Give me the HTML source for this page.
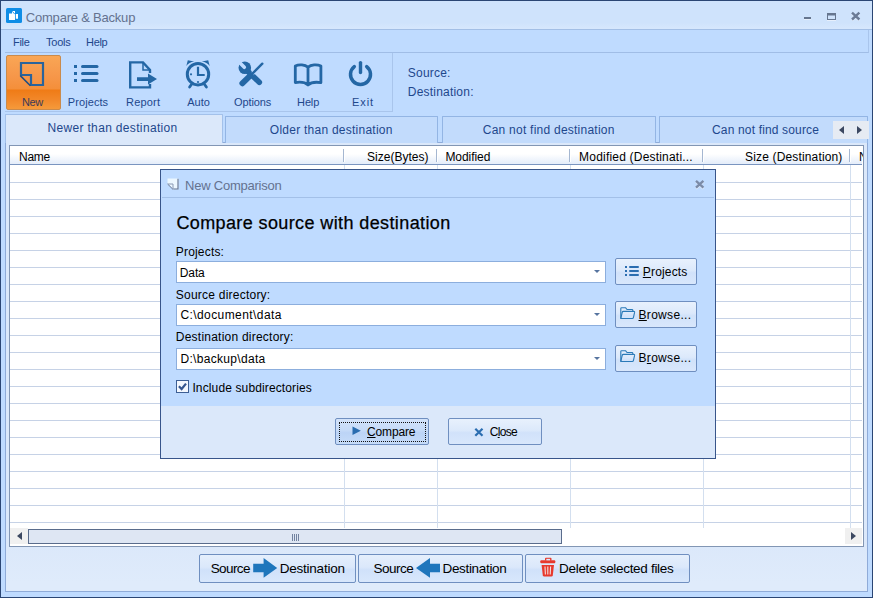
<!DOCTYPE html>
<html>
<head>
<meta charset="utf-8">
<style>
*{box-sizing:border-box;margin:0;padding:0}
html,body{width:873px;height:598px;overflow:hidden;background:#bfdbff}
body{font-family:"Liberation Sans",sans-serif;font-size:12px;position:relative}
div,i,svg{position:absolute}
.tx{position:absolute;white-space:nowrap;line-height:1}
.tx u{text-decoration:underline;text-underline-offset:1px}
#win{left:0;top:0;width:873px;height:598px;border:1px solid #2b4674;background:#bfdbff}
#title{left:1px;top:1px;width:871px;height:28px;background:linear-gradient(#cfe3fc 0,#cfe3fc 22px,#d6e7fd 27px)}
#tline{left:1px;top:29px;width:871px;height:1px;background:#a3bfe6}
#menu{left:5px;top:30px;width:864px;height:23px;border-right:1px solid #a9c5ec;border-bottom:1px solid #a0bde6}
#tb{left:5px;top:53px;width:388px;height:59px;border-right:1px solid #a9c5ec;border-bottom:1px solid #a9c5ec}
#new{left:6px;top:55px;width:55px;height:55px;border:1px solid #c98a4c;border-radius:2px;background:linear-gradient(#f9a655 0px,#f6974a 20px,#f48f3a 33px,#ef7b16 34px,#f2882a 44px,#f69c3c 54px)}
#panel{left:5px;top:142px;width:863px;height:450px;background:linear-gradient(#dbe8fa 0,#dbe8fa 400px,#dfebfb 440px);border:1px solid #8fabd8}
.tab{top:116px;height:27px;border:1px solid #93b5e4;border-bottom:none;background:#c2dbfc;border-radius:1px 1px 0 0}
#tab1{left:5px;top:114px;width:218px;height:29px;background:#dbe8fa;border-color:#a3c1ea}
#tabsc{left:833px;top:121px;width:36px;height:18px;background:#e6ebf3}
.tl{width:0;height:0;border-top:4.5px solid transparent;border-bottom:4.5px solid transparent;border-right:5px solid #3c4861}
.tr{width:0;height:0;border-top:4.5px solid transparent;border-bottom:4.5px solid transparent;border-left:5px solid #3c4861}
#grid{left:9px;top:145px;width:855px;height:402px;border:1px solid #8296b4;background:#fff;overflow:hidden}
#ghead{left:0;top:0;width:852px;height:19px;background:linear-gradient(#fff 0,#fff 8px,#e6eefa 17px);border-bottom:1px solid #7a95c0}
.vsep{top:3px;width:2px;height:13px;border-left:1px solid #a5b7d1;background:#fff}
.hl{left:0;width:852px;height:1px;background:#c6d2e6}
.vline{top:19px;width:1px;height:363px;background:#d3dfef}
#sb{left:0;top:382px;width:853px;height:18px;background:#fff}
#sbl{left:0;top:0;width:18px;height:16px;background:#f0f0f0}
#thumb{left:18px;top:1px;width:534px;height:15px;border:1px solid #5a6c8c;background:#dee6f3}
#grip{left:263px;top:4px;width:7px;height:7px;background:repeating-linear-gradient(90deg,#7283a0 0,#7283a0 1px,transparent 1px,transparent 2px)}
.bbtn{top:554px;height:29px;border:1px solid #6f8fc0;border-radius:2px;background:linear-gradient(#e5effc 0%,#dbe8fb 45%,#d0e1fa 55%,#d8e7fc 100%)}
#dlg{left:160px;top:169px;width:556px;height:290px;border:1px solid #38558a;background:#bfdbff}
#dline{left:1px;top:27px;width:552px;height:1px;background:#a3c0e8}
#dfoot{left:0;top:236px;width:554px;height:52px;background:#dbe8fa}
.combo{left:15px;width:430px;height:22px;border:1px solid #8caedd;background:#fff}
.combo i{right:5px;top:8px;width:0;height:0;border-left:3px solid transparent;border-right:3px solid transparent;border-top:3px solid #56749f}
.dbtn{height:27px;border:1px solid #6f8fc0;border-radius:2px;background:linear-gradient(#e8f1fd 0%,#dce9fb 45%,#d1e2fa 55%,#d8e7fc 100%)}
#chk{left:15px;top:210px;width:13px;height:13px;border:1px solid #3d5f94;background:#f4f8fe}
</style>
</head>
<body>
<div id="win"></div>
<div id="title"></div><div id="tline"></div>
<div id="menu"></div>
<div id="tb"></div>
<div id="new"></div>
<div id="panel"></div>
<div class="tab" style="left:225px;width:213px"></div>
<div class="tab" style="left:442px;width:214px"></div>
<div class="tab" style="left:659px;width:209px"></div>
<div class="tab" id="tab1"></div>
<div id="tabsc"><i class="tl" style="left:6px;top:4.5px"></i><i class="tr" style="left:24px;top:4.5px"></i></div>
<div id="grid">
 <div id="ghead">
  <i class="vsep" style="left:333px"></i><i class="vsep" style="left:426px"></i><i class="vsep" style="left:559px"></i><i class="vsep" style="left:692px"></i><i class="vsep" style="left:839px"></i>
 </div>
 <i class="hl" style="top:36px"></i><i class="hl" style="top:53px"></i><i class="hl" style="top:70px"></i><i class="hl" style="top:87px"></i><i class="hl" style="top:104px"></i><i class="hl" style="top:121px"></i><i class="hl" style="top:138px"></i><i class="hl" style="top:155px"></i><i class="hl" style="top:172px"></i><i class="hl" style="top:189px"></i><i class="hl" style="top:206px"></i><i class="hl" style="top:223px"></i><i class="hl" style="top:240px"></i><i class="hl" style="top:257px"></i><i class="hl" style="top:274px"></i><i class="hl" style="top:291px"></i><i class="hl" style="top:308px"></i><i class="hl" style="top:325px"></i><i class="hl" style="top:342px"></i><i class="hl" style="top:359px"></i><i class="hl" style="top:376px"></i>
 <i class="vline" style="left:334px"></i><i class="vline" style="left:427px"></i><i class="vline" style="left:560px"></i><i class="vline" style="left:693px"></i><i class="vline" style="left:840px"></i>
 <div id="sb"><div id="sbl"><i class="tl" style="left:7px;top:4px"></i></div><div id="thumb"><i id="grip"></i></div><div style="left:835px;top:0;width:17px;height:16px;background:#f0f0f0"><i class="tr" style="left:6px;top:4px"></i></div></div>
 <span class="tx" style="left:849px;top:5px;font-size:12px;color:#000">N</span>
</div>
<div class="bbtn" style="left:199px;width:157px"></div>
<div class="bbtn" style="left:358px;width:165px"></div>
<div class="bbtn" style="left:525px;width:165px"></div>
<div id="dlg">
 <div id="dfoot"></div>
 <div id="dline"></div>
 <div class="combo" style="top:91px"><i></i></div>
 <div class="combo" style="top:134px"><i></i></div>
 <div class="combo" style="top:178px"><i></i></div>
 <div class="dbtn" style="left:454px;top:88px;width:82px"></div>
 <div class="dbtn" style="left:454px;top:131px;width:82px"></div>
 <div class="dbtn" style="left:454px;top:175px;width:82px"></div>
 <div id="chk"></div>
 <div class="dbtn" style="left:174px;top:248px;width:94px;background:linear-gradient(#d3e3fa 0%,#c6dbf8 45%,#bcd4f6 55%,#c6dcf9 100%)"><i style="left:3px;top:3px;width:87px;height:20px;border:1px dotted #111"></i></div>
 <div class="dbtn" style="left:287px;top:248px;width:94px"></div>
</div>
<svg style="left:0;top:0" width="873" height="598" viewBox="0 0 873 598">
<!-- app icon -->
<rect x="6" y="8" width="16" height="15" rx="1.5" fill="#0f8de6"/>
<path d="M9,13.5 H12 V11 H15 V20 H9 Z M15.8,14 H18 V18.8 H15.8 Z" fill="#fff"/>
<path d="M12.3,11.3 L14.8,14.2" stroke="#0f8de6" stroke-width="0.9" fill="none"/>
<!-- window controls -->
<rect x="804" y="17" width="7" height="2" fill="#66768f"/><rect x="804" y="19" width="7" height="1" fill="#e6effc"/>
<rect x="827.5" y="13.5" width="8" height="6" fill="none" stroke="#66768f" stroke-width="1"/><rect x="827" y="13" width="9" height="2.5" fill="#66768f"/><rect x="827" y="20" width="9" height="1" fill="#e6effc"/>
<path d="M852,13.7 L859.4,20.5 M859.4,13.7 L852,20.5" stroke="#e3edfb" stroke-width="2.2" fill="none"/><path d="M852,12.7 L859.4,19.5 M859.4,12.7 L852,19.5" stroke="#6b7b96" stroke-width="2.4" fill="none"/>
<!-- New -->
<path d="M21,63 H43 V85 H31 V75 H21 Z" fill="none" stroke="#2a649c" stroke-width="2.2" stroke-linejoin="miter"/>
<path d="M20.3,75.6 L30.4,85.7" fill="none" stroke="#1d4d84" stroke-width="1.5"/>
<!-- Projects -->
<g fill="#2467a5">
<rect x="74" y="65" width="3" height="3"/><rect x="74" y="72" width="3" height="3"/><rect x="74" y="79" width="3" height="3"/>
<rect x="81" y="65" width="17.5" height="3" rx="1.5"/><rect x="81" y="72" width="17.5" height="3" rx="1.5"/><rect x="81" y="79" width="17.5" height="3" rx="1.5"/>
</g>
<!-- Report -->
<path d="M150,73 V70 L143,62.4 H130.2 V87.4 H150 V84" fill="none" stroke="#2467a5" stroke-width="2.4"/>
<path d="M143,62.5 V70 H150" fill="none" stroke="#2467a5" stroke-width="1.5"/>
<path d="M137,77.2 H148 V73.6 L157,79.1 L148,84.6 V81 H137 Z" fill="#2467a5"/>
<!-- Auto -->
<g stroke="#2467a5" fill="none">
<circle cx="198" cy="74.2" r="10.7" stroke-width="3"/>
<path d="M198,66.8 V75 H204.7" stroke-width="2.2"/>
<path d="M191.6,84.2 L189.6,87 M204.4,84.2 L206.4,87" stroke-width="2.8" stroke-linecap="round"/>
</g>
<g fill="#2467a5">
<path d="M186.3,66 L187.8,60.2 L194.2,61.6 Q189,62.5 186.3,66 Z"/><path d="M209.7,66 L208.2,60.2 L201.8,61.6 Q207,62.5 209.7,66 Z"/>
<circle cx="191" cy="74.3" r="1.1"/><circle cx="198" cy="82" r="1.1"/>
</g>
<!-- Options -->
<g stroke="#2467a5" fill="none" stroke-linecap="round">
<path d="M247,70.5 L259.3,82.3" stroke-width="5.6"/>
</g>
<circle cx="244.8" cy="67.8" r="6.3" fill="#2467a5"/>
<path d="M244.3,67.3 L238.8,61.8" stroke="#bfdbff" stroke-width="3.6" stroke-linecap="round" fill="none"/>
<path d="M262.9,63 L249.5,76.5" stroke="#bfdbff" stroke-width="3.8" fill="none"/>
<g stroke="#2467a5" fill="none" stroke-linecap="round">
<path d="M262.3,63.7 L252,74" stroke-width="2.4"/>
<path d="M250.8,75.2 L242.3,83.3" stroke-width="5.8"/>
</g>
<!-- Help -->
<path d="M308,67.3 C305,64.6 299,64.2 295.3,66 V82.6 C299,82 305,82.2 308,85 C311,82.2 317,82 320.9,82.6 V66 C317,64.2 311,64.6 308,67.3 Z M308,67.3 V84" fill="none" stroke="#2467a5" stroke-width="2.8" stroke-linejoin="round"/>
<!-- Exit -->
<path d="M354.3,66.6 A10,10 0 1 0 366.7,66.6" fill="none" stroke="#2467a5" stroke-width="3.5" stroke-linecap="round"/>
<path d="M360.5,62.6 V72.5" stroke="#2467a5" stroke-width="3.4" stroke-linecap="round" fill="none"/>
<!-- dialog title icon + close -->
<path d="M167.5,178.5 H178.5 V189.5 H173 L167.5,184 Z" fill="#ecf7ff"/>
<path d="M178,178.8 V189 H173.2" fill="none" stroke="#5f7090" stroke-width="1.1"/>
<path d="M167.6,184 L173,189.4" fill="none" stroke="#5f7090" stroke-width="1"/>
<path d="M167.8,184 H173 V189" fill="none" stroke="#8a99b4" stroke-width="1"/>
<path d="M696,181.8 L703.4,188.6 M703.4,181.8 L696,188.6" stroke="#dfeafa" stroke-width="2.2" fill="none"/><path d="M696,180.8 L703.4,187.6 M703.4,180.8 L696,187.6" stroke="#7b8ba8" stroke-width="2.4" fill="none"/>
<!-- projects btn icon -->
<g fill="#2a6db0">
<rect x="625" y="266" width="2" height="2"/><rect x="625" y="270" width="2" height="2"/><rect x="625" y="274" width="2" height="2"/>
<rect x="629" y="266" width="10" height="2" rx="1"/><rect x="629" y="270" width="10" height="2" rx="1"/><rect x="629" y="274" width="10" height="2" rx="1"/>
</g>
<!-- folders -->
<g fill="none" stroke="#2b7ab8" stroke-width="1.1" stroke-linejoin="round">
<path d="M620.8,318.5 V308.5 Q620.8,307.7 621.6,307.7 H625.5 L627,309.5 H632 Q632.8,309.5 632.8,310.3 V311.5"/>
<path d="M620.8,318.5 L622.2,312.3 Q622.4,311.4 623.3,311.4 H633.8 Q634.8,311.4 634.6,312.4 L633.4,317.7 Q633.2,318.5 632.3,318.5 Z"/>
</g>
<g transform="translate(0,43)" fill="none" stroke="#2b7ab8" stroke-width="1.1" stroke-linejoin="round">
<path d="M620.8,318.5 V308.5 Q620.8,307.7 621.6,307.7 H625.5 L627,309.5 H632 Q632.8,309.5 632.8,310.3 V311.5"/>
<path d="M620.8,318.5 L622.2,312.3 Q622.4,311.4 623.3,311.4 H633.8 Q634.8,311.4 634.6,312.4 L633.4,317.7 Q633.2,318.5 632.3,318.5 Z"/>
</g>

<!-- check -->
<path d="M178.9,386.3 L181.6,389 L186,383.6" fill="none" stroke="#35568f" stroke-width="2.2"/>
<!-- play, x -->
<path d="M352.5,426.5 L360.8,430.8 L352.5,435 Z" fill="#2a6db0"/>
<path d="M475.3,428.7 L482.5,435.7 M482.5,428.7 L475.3,435.7" stroke="#2a6db0" stroke-width="2.2" fill="none"/>
<!-- arrows -->
<path d="M253.2,563.8 H263.6 V558 L277.2,568 L263.6,577.8 V572.2 H253.2 Z" fill="#1f76bc"/>
<path d="M440,563.8 H430 V558 L416,568 L430,577.8 V572.2 H440 Z" fill="#1f76bc"/>
<!-- trash -->
<g fill="#e7392d">
<rect x="545" y="557.7" width="6.5" height="3" rx="1"/>
<rect x="540.3" y="560.3" width="15" height="3" rx="1"/>
<path d="M541.6,565 H554 L552.8,575.3 Q552.6,576.6 551.3,576.6 H544.3 Q543,576.6 542.8,575.3 Z"/>
</g>
<rect x="546.3" y="558.8" width="3.8" height="1.6" fill="#dbe8fb"/>
<path d="M545,566.5 L545.4,574.5 M547.8,566.5 V574.5 M550.6,566.5 L550.2,574.5" stroke="#f3dede" stroke-width="1.1" fill="none"/>
</svg>

<span class="tx" style="left:25.8px;top:11px;font-size:13px;letter-spacing:-0.21px;color:#64728f">Compare &amp; Backup</span>
<span class="tx" style="left:13.0px;top:37px;font-size:11px;letter-spacing:-0.3px;color:#1e478c">File</span>
<span class="tx" style="left:46.0px;top:37px;font-size:11px;letter-spacing:-0.23px;color:#1e478c">Tools</span>
<span class="tx" style="left:86.0px;top:37px;font-size:11px;letter-spacing:-0.3px;color:#1e478c">Help</span>
<span class="tx" style="left:22.1px;top:97px;font-size:11px;letter-spacing:-0.45px;color:#3b3b5a">New</span>
<span class="tx" style="left:67.8px;top:97px;font-size:11px;letter-spacing:0.08px;color:#1e478c">Projects</span>
<span class="tx" style="left:126.1px;top:97px;font-size:11px;letter-spacing:0.18px;color:#1e478c">Report</span>
<span class="tx" style="left:187.2px;top:97px;font-size:11px;letter-spacing:0.0px;color:#1e478c">Auto</span>
<span class="tx" style="left:234.0px;top:97px;font-size:11px;letter-spacing:-0.09px;color:#1e478c">Options</span>
<span class="tx" style="left:297.1px;top:97px;font-size:11px;letter-spacing:-0.15px;color:#1e478c">Help</span>
<span class="tx" style="left:352.1px;top:97px;font-size:11px;letter-spacing:0.9px;color:#1e478c">Exit</span>
<span class="tx" style="left:407.8px;top:67px;font-size:12px;letter-spacing:0.21px;color:#1e478c">Source:</span>
<span class="tx" style="left:407.8px;top:86px;font-size:12px;letter-spacing:0.21px;color:#1e478c">Destination:</span>
<span class="tx" style="left:47.4px;top:122px;font-size:12px;letter-spacing:0.34px;color:#1e478c">Newer than destination</span>
<span class="tx" style="left:269.8px;top:124px;font-size:12px;letter-spacing:0.25px;color:#1e478c">Older than destination</span>
<span class="tx" style="left:482.8px;top:124px;font-size:12px;letter-spacing:0.24px;color:#1e478c">Can not find destination</span>
<span class="tx" style="left:712.0px;top:124px;font-size:12px;letter-spacing:0.16px;color:#1e478c">Can not find source</span>
<span class="tx" style="left:19.1px;top:151px;font-size:12px;letter-spacing:-0.3px;color:#000">Name</span>
<span class="tx" style="left:367.1px;top:151px;font-size:12px;letter-spacing:0.0px;color:#000">Size(Bytes)</span>
<span class="tx" style="left:445.4px;top:151px;font-size:12px;letter-spacing:-0.05px;color:#000">Modified</span>
<span class="tx" style="left:579.1px;top:151px;font-size:12px;letter-spacing:0.2px;color:#000">Modified (Destinati...</span>
<span class="tx" style="left:745.1px;top:151px;font-size:12px;letter-spacing:0.15px;color:#000">Size (Destination)</span>
<span class="tx" style="left:185.1px;top:179px;font-size:13px;letter-spacing:-0.24px;color:#64728f">New Comparison</span>
<span class="tx" style="left:176.4px;top:214px;font-size:18px;letter-spacing:0.39px;color:#000;-webkit-text-stroke:0.25px #000">Compare source with destination</span>
<span class="tx" style="left:175.8px;top:246px;font-size:12px;letter-spacing:0.18px;color:#000">Projects:</span>
<span class="tx" style="left:179.8px;top:267px;font-size:12px;letter-spacing:-0.13px;color:#000">Data</span>
<span class="tx" style="left:175.8px;top:289px;font-size:12px;letter-spacing:0.23px;color:#000">Source directory:</span>
<span class="tx" style="left:180.4px;top:309px;font-size:12px;letter-spacing:0.42px;color:#000">C:\document\data</span>
<span class="tx" style="left:175.8px;top:331px;font-size:12px;letter-spacing:0.23px;color:#000">Destination directory:</span>
<span class="tx" style="left:180.4px;top:353px;font-size:12px;letter-spacing:0.32px;color:#000">D:\backup\data</span>
<span class="tx" style="left:192.4px;top:382px;font-size:12px;letter-spacing:0.13px;color:#000">Include subdirectories</span>
<span class="tx" style="left:642.8px;top:266px;font-size:12px;letter-spacing:0.17px;color:#000"><u>P</u>rojects</span>
<span class="tx" style="left:638.5px;top:309px;font-size:12px;letter-spacing:0.31px;color:#000"><u>B</u>rowse...</span>
<span class="tx" style="left:638.5px;top:352px;font-size:12px;letter-spacing:0.31px;color:#000">B<u>r</u>owse...</span>
<span class="tx" style="left:367.0px;top:426px;font-size:12px;letter-spacing:-0.15px;color:#000"><u>C</u>ompare</span>
<span class="tx" style="left:489.7px;top:426px;font-size:12px;letter-spacing:-0.69px;color:#000">C<u>l</u>ose</span>
<span class="tx" style="left:210.7px;top:562px;font-size:13.5px;letter-spacing:-0.6px;color:#000">Source</span>
<span class="tx" style="left:279.8px;top:562px;font-size:13.5px;letter-spacing:-0.24px;color:#000">Destination</span>
<span class="tx" style="left:373.5px;top:562px;font-size:13.5px;letter-spacing:-0.48px;color:#000">Source</span>
<span class="tx" style="left:442.5px;top:562px;font-size:13.5px;letter-spacing:-0.33px;color:#000">Destination</span>
<span class="tx" style="left:559.1px;top:562px;font-size:13.5px;letter-spacing:-0.31px;color:#000">Delete selected files</span>
</body>
</html>
